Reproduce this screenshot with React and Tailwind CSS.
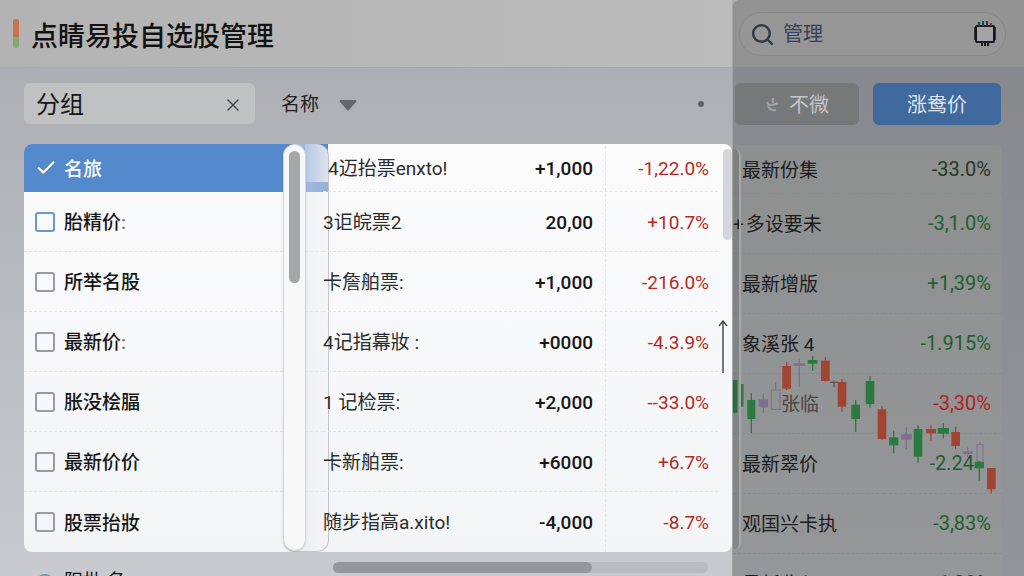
import { useState } from 'react';
import { Search, X, Check } from 'lucide-react';

const FIELDS = [
  { key: 'name',   label: '名旅' },
  { key: 'price',  label: '胎精价', colon: true },
  { key: 'stock',  label: '所举名股' },
  { key: 'latest', label: '最新价', colon: true },
  { key: 'change', label: '胀没桧腷' },
  { key: 'last',   label: '最新价价' },
  { key: 'ticket', label: '股票抬妝' },
];

const QUOTES = [
  { name: '4迈抬票enxto!',   value: '+1,000', pct: '-1,22.0%' },
  { name: '3讵皖票2',        value: '20,00',  pct: '+10.7%' },
  { name: '卡詹舶票:',       value: '+1,000', pct: '-216.0%' },
  { name: '4记指幕妝 :',     value: '+0000',  pct: '-4.3.9%' },
  { name: '1 记检票:',       value: '+2,000', pct: '--33.0%' },
  { name: '卡新舶票:',       value: '+6000',  pct: '+6.7%' },
  { name: '随步指高a.xito!', value: '-4,000', pct: '-8.7%' },
];

const TRENDS = [
  { name: '最新份集',   pct: '-33.0%',  color: 'text-[#24382a]' },
  { name: '多设要未',   pct: '-3,1.0%', color: 'text-[#1f5f2e]', mark: true },
  { name: '最新增版',   pct: '+1,39%',  color: 'text-[#1f5f2e]' },
  { name: '象溪张 4',   pct: '-1.915%', color: 'text-[#1f5f2e]' },
  { name: '张临',       pct: '-3,30%',  color: 'text-[#b02424]', muted: true },
  { name: '最新翠价',   pct: '-2.24',   color: 'text-[#1f5f2e]', short: true },
  { name: '观国兴卡执', pct: '-3,83%',  color: 'text-[#1f5f2e]' },
  { name: '最新收入',   pct: '-1,39%',  color: 'text-[#24382a]' },
];

const GREEN = '#2a7a40';
const RED = '#a04434';
const PURPLE = '#806f92';

// x centre, wick top, wick bottom, body top, body bottom, body width, colour
const CANDLES = [
  [104, 210, 310, 210, 308, 16, GREEN],
  [125, 222, 290, 222, 290, 11, GREEN],
  [154, 250, 370, 270, 327, 24, GREEN],
  [190, 250, 308, 268, 292, 28, PURPLE],
  [227, 218, 240, 240, 298, 26, 'none'],
  [260, 155, 240, 168, 236, 26, RED],
  [298, 148, 230, 160, 168, 34, PURPLE],
  [338, 138, 182, 150, 161, 30, GREEN],
  [376, 142, 215, 152, 213, 26, RED],
  [402, 212, 232, 215, 219, 24, '#6b5140'],
  [426, 207, 305, 216, 290, 26, RED],
  [467, 270, 366, 284, 327, 26, GREEN],
  [510, 198, 293, 213, 282, 26, GREEN],
  [546, 288, 390, 298, 387, 26, RED],
  [581, 362, 430, 382, 406, 28, GREEN],
  [619, 352, 418, 373, 389, 32, PURPLE],
  [654, 345, 458, 357, 440, 26, GREEN],
  [693, 345, 392, 357, 370, 30, RED],
  [730, 340, 385, 354, 371, 34, GREEN],
  [767, 350, 418, 366, 408, 26, RED],
  [803, 412, 440, 424, 432, 30, PURPLE],
  [840, 395, 403, 403, 455, 18, 'none'],
  [838, 453, 512, 456, 475, 28, GREEN],
  [874, 474, 550, 474, 538, 26, RED],
];

function Candles() {
  return (
    <svg
      className="absolute left-0 top-[208px] pointer-events-none"
      width="270" height="144" viewBox="99 129 810 432"
    >
      {CANDLES.map(([x, hi, lo, top, bottom, w, color], i) => (
        <g key={i}>
          <line x1={x} x2={x} y1={hi} y2={lo} stroke={color === 'none' ? PURPLE : color} strokeWidth="4" />
          <rect
            x={x - w / 2} y={top} width={w} height={bottom - top}
            fill={color} stroke={color === 'none' ? PURPLE : 'none'} strokeWidth="3"
          />
        </g>
      ))}
    </svg>
  );
}

function ChipIcon() {
  return (
    <svg width="22" height="26" viewBox="0 0 22 26" fill="none">
      <rect x="2" y="5" width="18" height="16" rx="1" fill="#a3a4a8" stroke="#15181f" strokeWidth="2" />
      <path d="M1 6v13M21 6v13" stroke="#15181f" strokeWidth="1.5" />
      <path d="M5 1v4M9 0v5M13 0v5" stroke="#1d4147" strokeWidth="2" />
      <path d="M17 2v3" stroke="#8a2f2c" strokeWidth="2" />
      <path d="M8 21v4M11 21v4M14 21v4" stroke="#15181f" strokeWidth="2" />
    </svg>
  );
}

function Toolbar() {
  return (
    <div className="flex items-center h-[42px] mt-[15px] pl-6">
      <div className="flex items-center w-[231px] h-full rounded-md bg-[#c0c1c3] pl-3 pr-3 pt-[2px]">
        <input
          aria-label="分组"
          defaultValue="分组"
          className="flex-1 min-w-0 bg-transparent text-2xl text-[#161616] outline-none"
        />
        <button aria-label="清除" className="text-[#444]">
          <X size={20} strokeWidth={1.6} />
        </button>
      </div>
      <div className="relative flex items-center ml-[26px] w-20 pt-1">
        <select aria-label="名称" className="w-full appearance-none bg-transparent text-[19px] text-[#222] outline-none">
          <option>名称</option>
        </select>
        <svg className="absolute right-1 pointer-events-none" width="18" height="11" viewBox="0 0 18 11">
          <path d="M1 0h16q1 1 0 2L10 10q-1 1-2 0L1 2Q0 1 1 0z" fill="#66686b" />
        </svg>
      </div>
      <span className="ml-auto mr-7 size-[6px] rounded-full bg-[#606266]" />
    </div>
  );
}

function FieldList() {
  const [checked, setChecked] = useState({ name: true });
  const toggle = (key) => setChecked({ ...checked, [key]: !checked[key] });

  return (
    <ul className="w-[299px] shrink-0">
      {FIELDS.map(({ key, label, colon }, i) => (
        <li
          key={key}
          className={i === 0
            ? 'h-12 mr-[-5px] bg-[#5489cc] text-white'
            : 'h-[60px] border-b border-dashed border-[#e3e4e7] last:border-0 text-[#161616]'}
        >
          <label className="relative flex items-center h-full pl-[11px] gap-[9px] text-[19px]">
            <input
              type="checkbox"
              checked={!!checked[key]}
              onChange={() => toggle(key)}
              className={`size-5 appearance-none rounded-[3px] border-2
                ${i === 0 ? 'border-transparent' : i === 1 ? 'border-[#6f96cb]' : 'border-[#999b9e]'}`}
            />
            {checked[key] && <Check size={22} strokeWidth={2.4} className="absolute left-[11px]" />}
            <span className="pt-1 font-medium">
              {label}
              {colon && <span className="text-[#777]">:</span>}
            </span>
          </label>
        </li>
      ))}
    </ul>
  );
}

function QuoteTable() {
  return (
    <table className="flex-1 relative mr-[14px] table-fixed text-[19px] leading-6 text-[#161616]">
      <tbody className="block">
        {QUOTES.map(({ name, value, pct }, i) => (
          <tr
            key={name}
            className={`flex pt-[2px] border-b border-dashed border-[#e3e4e7] last:border-0 ${i === 0 ? 'h-12' : 'h-[60px]'}`}
          >
            <td className={`flex-1 flex items-center whitespace-nowrap text-[#2b2b2b] ${i === 0 ? 'pl-[5px]' : ''}`}>{name}</td>
            <td className="flex items-center justify-end pr-3 border-r border-dashed border-[#e6e7ea] font-medium">{value}</td>
            <td className="w-28 flex items-center justify-end pr-[9px] text-[#b32a24]">{pct}</td>
          </tr>
        ))}
      </tbody>
    </table>
  );
}

function Sidebar() {
  return (
    <aside className="w-[292px] shrink-0 flex flex-col rounded-tl-lg overflow-hidden bg-linear-to-b from-[#87888d] to-[#93949a] border-l border-[#a2a3a5]">
      <div className="h-[68px] shrink-0 bg-[#939393] border-b border-[#87888c] pl-[6px] pr-[18px] pt-3">
        <div className="flex items-center h-11 rounded-full border border-[#86878a] bg-[#969696] pl-[10px] pr-[9px]">
          <Search size={25} strokeWidth={2.4} className="text-[#353a4a] shrink-0" />
          <input
            aria-label="搜索"
            defaultValue="管理"
            className="flex-1 min-w-0 ml-2 bg-transparent text-xl text-[#37415c] outline-none"
          />
          <button aria-label="芯片"><ChipIcon /></button>
        </div>
      </div>

      <div className="flex gap-[14px] h-[42px] shrink-0 mt-[15px] pl-[2px] pr-[23px] text-xl">
        <button className="flex-1 flex items-center justify-center gap-2 rounded-md bg-[#77787a] text-[#c4c5c7] pt-[2px]">
          <svg width="16" height="16" viewBox="0 0 16 16" fill="none" stroke="#a0a1a3" strokeWidth="2">
            <path d="M2 5q1 3 4 3t7-2M8 1v5M3 8q1 6 8 5" />
          </svg>
          不微
        </button>
        <button className="w-32 rounded-md bg-[#406a9e] text-[#dde3eb] pt-[2px]">涨鸯价</button>
      </div>

      <div className="relative mt-5 mr-[22px] rounded-tr-md bg-linear-to-b from-[#8e8f8f] to-[#969799]">
        <table className="w-full text-[19px] leading-6 text-[#1c1c1c]">
          <tbody>
            {TRENDS.map(({ name, pct, color, mark, muted, short }, i) => (
              <tr
                key={name}
                className={`border-b border-dashed border-[#898b8d] ${i === 0 ? 'h-12' : 'h-[60px]'}`}
              >
                <td className={`whitespace-nowrap pt-1 ${muted ? 'pl-12 text-[#4d4444]' : mark ? 'pl-0' : 'pl-[9px]'}`}>
                  {mark && <span className="mr-[2px]">+</span>}
                  {name}
                </td>
                <td className={`text-right text-xl ${color} ${short ? 'pr-7' : 'pr-[11px]'}`}>{pct}</td>
              </tr>
            ))}
          </tbody>
        </table>
        <Candles />
        <div className="absolute left-0 top-1 w-2 h-[400px] rounded-r-md bg-black/10 border-r-2 border-[#a6a7a8]" />
      </div>
    </aside>
  );
}

export default function App() {
  return (
    <div className="flex h-screen overflow-hidden bg-linear-to-b from-[#a9abb1] to-[#c9cad0] font-[Roboto,'Noto_Sans_CJK_SC',sans-serif]">
      <main className="flex-1 min-w-0 flex flex-col">
        <header className="flex items-center h-[68px] shrink-0 pl-[13px] gap-3 bg-linear-to-r from-[#b3b3b3] to-[#bcbcbc] border-b border-[#a7a9ae]">
          <span className="w-[6px] h-[29px] rounded-xs bg-linear-to-b from-[#c97350] from-60% to-[#86a878] to-65%" />
          <h1 className="pt-2 text-[27px] font-medium text-[#121212]">点睛易投自选股管理</h1>
        </header>

        <Toolbar />

        <section className="relative flex shrink-0 mt-5 ml-6 rounded-lg overflow-hidden bg-linear-to-b from-[#fbfbfc] to-[#f4f5f7]">
          <FieldList />

          {/* Scroll track and the frosted strip beside it */}
          <div className="absolute left-[259px] inset-y-0 w-[46px] rounded-xl border-r border-b border-[#c3c5c9] bg-linear-to-r from-[#e4e6ea]/60 to-[#f1f2f5]/40">
            <div className="absolute left-[22px] right-0 top-0 h-[38px] rounded-tr-xl bg-linear-to-r from-[#b4c9e8] to-[#dde3ec]" />
            <div className="absolute left-0 inset-y-0 w-[23px] rounded-full bg-[#f8f8f8] border border-[#d2d4d8] shadow-sm pt-[6px]">
              <div className="mx-auto w-[11px] h-[132px] rounded-full bg-[#a6a7a9]" />
            </div>
          </div>

          <QuoteTable />

          <div className="absolute right-0 top-[5px] w-[9px] h-[91px] rounded-full bg-[#d4d6d9]" />
          <svg className="absolute right-1 top-[176px]" width="10" height="54" viewBox="0 0 10 54" fill="none" stroke="#444">
            <path d="M5 53V2M1 6l4-5 4 5" strokeWidth="1.4" />
          </svg>
        </section>

        <div className="flex h-6 shrink-0">
          <label className="flex items-start gap-[9px] pl-[35px] pt-[18px] text-[19px] leading-6 text-[#161616]">
            <input type="checkbox" className="mt-1 size-5 shrink-0 appearance-none rounded-full border-2 border-[#6f96cb]" />
            阳批:名
          </label>
          <div className="ml-auto mr-6 mt-[10px] w-[375px] h-[11px] rounded-full bg-[#b9bbc0]">
            <div className="w-[69%] h-full rounded-full bg-[#94979b]" />
          </div>
        </div>
      </main>

      <Sidebar />
    </div>
  );
}
